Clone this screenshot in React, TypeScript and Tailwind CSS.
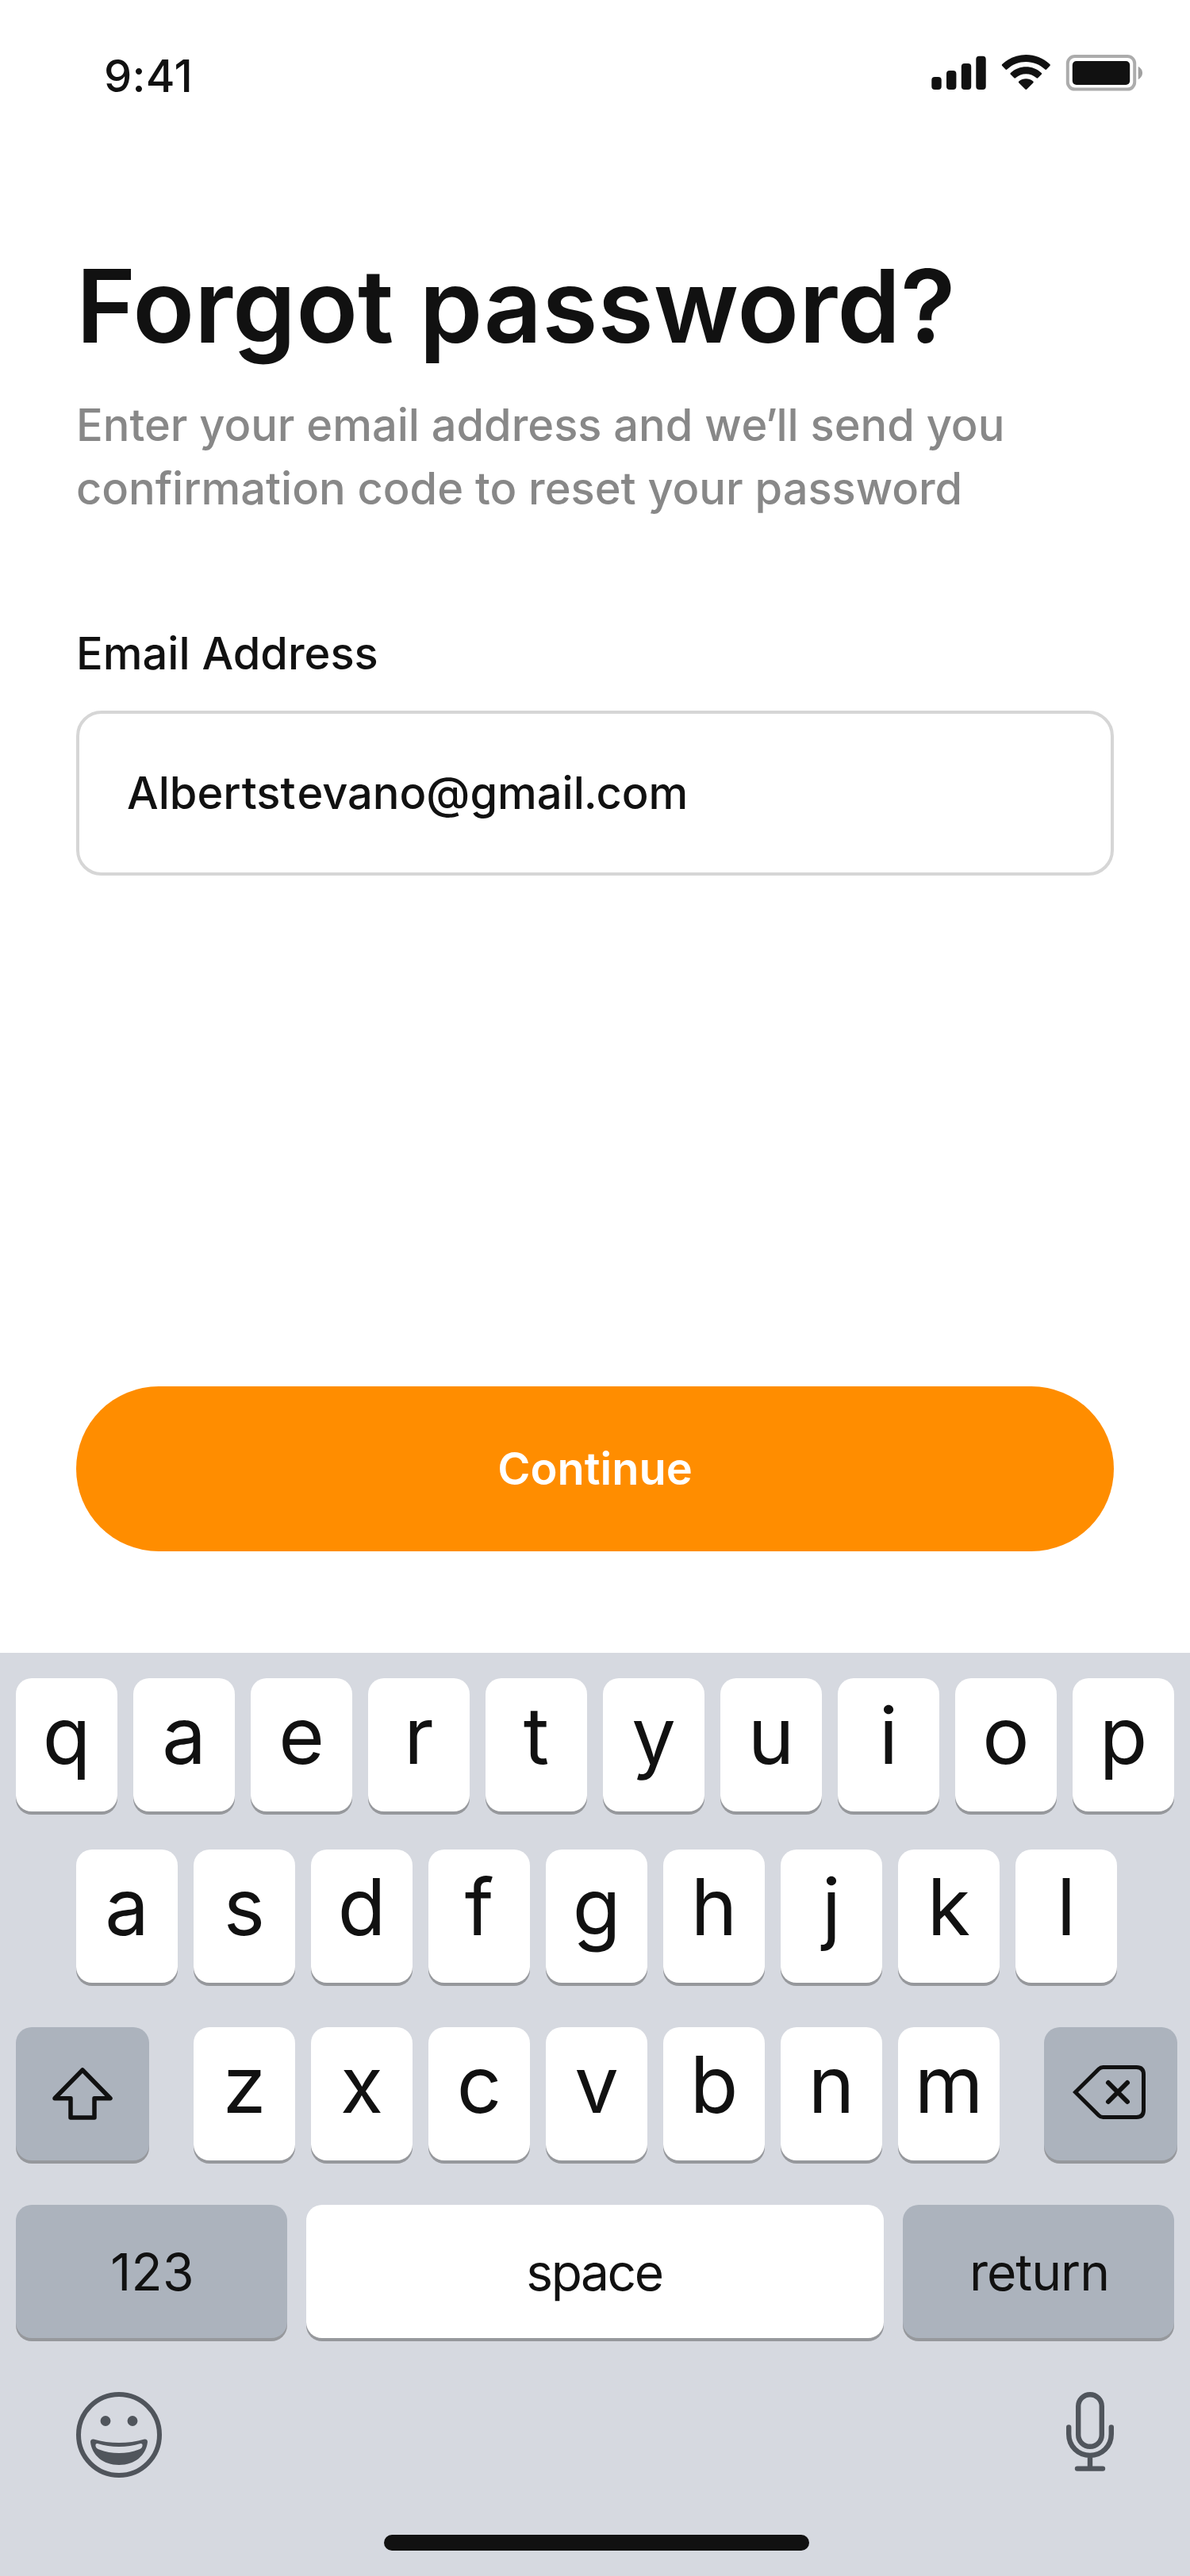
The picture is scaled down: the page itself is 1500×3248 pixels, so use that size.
import type { ReactNode } from "react";

function StatusBar() {
  return (
    <header className="flex h-[176px] items-start justify-between pr-[58px] pl-[131px] pt-[69px]">
      <span className="-mt-[7px] text-[56px] leading-[68px] font-medium tracking-[0.3px]">9:41</span>
      <svg width="268" height="46" viewBox="0 0 268 46" fill="#111111">
        <rect x="0.3" y="28" width="12.4" height="16" rx="4" />
        <rect x="19" y="20" width="12.4" height="24" rx="4" />
        <rect x="37.8" y="11" width="12.4" height="33" rx="4" />
        <rect x="56.3" y="1.8" width="12.4" height="42.2" rx="4" />
        <g transform="translate(88.3 0)">
          <path d="M31 9C40.1 9 48.6 12.4 55 18.6C55.5 19 56.3 19 56.8 18.5L61.1 14C61.7 13.5 61.7 12.6 61.1 12.1C44.3 -4 17.7 -4 0.9 12.1C0.3 12.6 0.3 13.5 0.9 14L5.2 18.5C5.7 19 6.5 19 7 18.6C13.4 12.4 22 9 31 9Z" />
          <path d="M31 24.2C35.9 24.2 40.6 26 44.2 29.3C44.7 29.8 45.5 29.8 46 29.3L50.5 24.8C51 24.3 51 23.5 50.5 23C39.5 12.7 22.5 12.7 11.5 23C11 23.5 11 24.3 11.5 24.8L16 29.3C16.5 29.8 17.3 29.8 17.8 29.3C21.4 26 26.1 24.2 31 24.2Z" />
          <path d="M40 35.4C40.6 34.9 40.5 34 40 33.5C34.7 29.2 27.3 29.2 22 33.5C21.5 34 21.4 34.9 22 35.4L30 43.5C30.5 44 31.5 44 32 43.5Z" />
        </g>
        <rect x="171.8" y="2" width="84.4" height="41.6" rx="9" fill="none" stroke="#111111" strokeOpacity="0.35" strokeWidth="4" />
        <path d="M260.7 15V31C263.8 29.7 266 26.5 266 23C266 19.5 263.8 16.3 260.7 15Z" fillOpacity="0.4" />
        <rect x="177.8" y="8" width="72.4" height="30" rx="5" />
      </svg>
    </header>
  );
}

const LETTER = "w-[128px] bg-white text-[99px] pb-[24px]";

function Key({ className, children }: { className: string; children: ReactNode }) {
  return (
    <button
      type="button"
      className={`flex h-[168px] shrink-0 items-center justify-center rounded-[20px] leading-[116px] shadow-[0_4px_0_#96989c] ${className}`}
    >
      {children}
    </button>
  );
}

function Letters({ keys }: { keys: string }) {
  return (
    <div className="flex gap-[20px]">
      {keys.split("").map((k) => (
        <Key key={k} className={LETTER}>
          {k}
        </Key>
      ))}
    </div>
  );
}

function Keyboard() {
  return (
    <section className="flex h-[1164px] flex-col bg-[#d6d9e0] pt-[32px]">
      <div className="flex pl-[20px]">
        <Letters keys="qaertyuiop" />
      </div>
      <div className="mt-[48px] flex pl-[96px]">
        <Letters keys="asdfghjkl" />
      </div>
      <div className="mt-[56px] flex gap-[56px] pl-[20px]">
        <Key className="w-[168px] bg-[#acb3bd]">
          <svg width="76" height="66" viewBox="0 0 76 66" fill="none" stroke="#111111" strokeWidth="5.5" strokeLinejoin="round">
            <path d="M38 3L73 38.7H53V62.9H23V38.7H3Z" />
          </svg>
        </Key>
        <Letters keys="zxcvbnm" />
        <Key className="w-[168px] bg-[#acb3bd] pr-[4px] pb-[4px]">
          <svg width="92" height="68" viewBox="0 0 92 68" fill="none" stroke="#111111" strokeWidth="5">
            <path d="M3.5 34L33 4.8Q35.3 2.5 38.5 2.5H80.5Q89.5 2.5 89.5 11.5V56.5Q89.5 65.5 80.5 65.5H38.5Q35.3 65.5 33 63.2Z" />
            <path d="M45 22L69 46M69 22L45 46" strokeWidth="6" strokeLinecap="round" />
          </svg>
        </Key>
      </div>
      <div className="mt-[56px] flex gap-[24px] pl-[20px] text-[64px]">
        <Key className="w-[342px] bg-[#acb3bd] pt-[2px] pl-[2px] tracking-[0.3px]">123</Key>
        <Key className="w-[728px] bg-white pt-[2px] pr-[2px] tracking-[-2.4px]">space</Key>
        <Key className="w-[342px] bg-[#acb3bd] pt-[2px] pl-[2px] tracking-[-1px]">return</Key>
      </div>
      <div className="mt-[68px] flex justify-between pr-[96px] pl-[96px]">
        <svg width="108" height="108" viewBox="0 0 108 108" fill="#50555c">
          <circle cx="54" cy="54" r="51" fill="none" stroke="#50555c" strokeWidth="6" />
          <circle cx="37" cy="36.5" r="6.4" />
          <circle cx="71" cy="36.5" r="6.4" />
          <path
            fillRule="evenodd"
            d="M22 59.500C43 65.500 65 65.500 86 59.500Q90 59 90 63C88 80 74 92 54 92C34 92 20 80 18 63Q18 59 22 59.500ZM27 65Q24 64.500 24.500 68Q25 71 29 72.500C44 78.500 64 78.500 79 72.500Q83 71 83.500 68Q84 64.500 81 65C64 70.400 44 70.400 27 65Z"
          />
        </svg>
        <svg width="60" height="100" viewBox="0 0 60 100" fill="none" stroke="#50555c" strokeWidth="6.4" strokeLinecap="round">
          <rect x="15.200" y="3.200" width="29.600" height="65.600" rx="14.800" />
          <path d="M3.200 44.500V53C3.200 68.500 15 80 30 80S56.800 68.500 56.800 53V44.500M30 80V96M14 96.600H46" />
        </svg>
      </div>
      <div className="mt-[72px] ml-[484px] h-[20px] w-[536px] rounded-full bg-[#111111]" />
    </section>
  );
}

export default function App() {
  return (
    <div className="flex h-[3248px] w-[1500px] flex-col overflow-hidden bg-white font-['Inter',sans-serif] text-[#111111]">
      <StatusBar />
      <main className="flex flex-1 flex-col px-[96px]">
        <h1 className="mt-[132px] text-[128px] leading-[156px] font-semibold whitespace-nowrap">Forgot password?</h1>
        <p className="mt-[32px] text-[56px] leading-[80px] font-medium tracking-[-0.03px] whitespace-nowrap text-[#888888]">
          Enter your email address and w<span className="tracking-[-1.6px]">e’</span>ll send you
          <br />
          confirmation code to reset your password
        </p>
        <span id="email-label" className="mt-[128px] text-[56px] leading-[80px] font-medium">
          Email Address
        </span>
        <div
          role="textbox"
          aria-labelledby="email-label"
          className="mt-[32px] flex h-[208px] items-center rounded-[32px] border-4 border-[#d6d6d6] px-[60px] text-[56px] font-medium"
        >
          <span>
            Albe<span className="tracking-[1.8px]">r</span>ts<span className="tracking-[1.8px]">t</span>evano@gmai
            <span className="tracking-[-1.2px]">l.</span>com
          </span>
        </div>
        <button type="button" className="mt-[644px] h-[208px] rounded-full bg-[#ff8d00] text-[56px] font-semibold text-white">
          Continue
        </button>
      </main>
      <Keyboard />
    </div>
  );
}
